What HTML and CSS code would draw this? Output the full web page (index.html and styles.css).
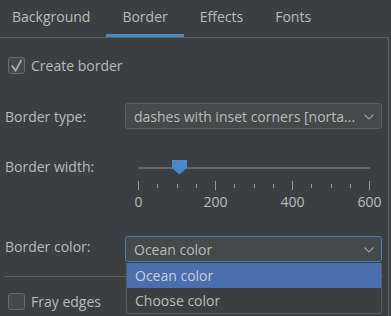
FILE: index.html
```html
<!DOCTYPE html>
<html>
<head>
<meta name="viewport" content="width=device-width, initial-scale=1">
<title>Border settings</title>
<link rel="stylesheet" href="styles.css">
</head>
<body>

<div class="tabs">
  <div class="tab first">Background</div>
  <div class="tab active">Border</div>
  <div class="tab">Effects</div>
  <div class="tab">Fonts</div>
</div>

<div class="panel">

  <label class="check-row first-check">
    <span class="checkbox checked">
      <svg width="17" height="17" viewBox="0 0 17 17"><path d="M3.8 8.6 L7.6 13.6 L13.4 2.8" fill="none" stroke="#aeaeae" stroke-width="1.7"/></svg>
    </span>
    Create border
  </label>

  <div class="row type-row">
    <div class="label">Border type:</div>
    <div class="combo">
      <span class="combo-text">dashes with inset corners [norta...</span>
      <svg class="chevron" width="10" height="6" viewBox="0 0 10 6"><path d="M0.5 0.5 L5 5 L9.5 0.5" fill="none" stroke="#9a9a9a" stroke-width="1.2"/></svg>
    </div>
  </div>

  <div class="row width-row">
    <div class="label">Border width:</div>
    <div class="slider">
      <div class="track">
        <div class="thumb" style="left: 34px;">
          <svg width="15" height="15" viewBox="0 0 15 15"><path d="M0 0 H15 V8 L7.5 14.5 L0 8 Z" fill="#4a88c7"/></svg>
        </div>
      </div>
      <div class="ticks">
        <span class="tick major"></span><span class="tick"></span><span class="tick"></span><span class="tick"></span>
        <span class="tick major"></span><span class="tick"></span><span class="tick"></span><span class="tick"></span>
        <span class="tick major"></span><span class="tick"></span><span class="tick"></span><span class="tick"></span>
        <span class="tick major"></span>
      </div>
      <div class="tick-labels">
        <span>0</span><span>200</span><span>400</span><span>600</span>
      </div>
    </div>
  </div>

  <div class="row color-row">
    <div class="label">Border color:</div>
    <div class="combo focused">
      <span class="combo-text">Ocean color</span>
      <svg class="chevron" width="10" height="6" viewBox="0 0 10 6"><path d="M0.5 0.5 L5 5 L9.5 0.5" fill="none" stroke="#9a9a9a" stroke-width="1.2"/></svg>
      <div class="popup">
        <div class="item selected">Ocean color</div>
        <div class="item">Choose color</div>
      </div>
    </div>
  </div>

  <div class="separator"></div>

  <label class="check-row">
    <span class="checkbox"></span>
    Fray edges
  </label>

</div>

</body>
</html>
```

FILE: styles.css
```css
* {
  box-sizing: border-box;
}

body {
  margin: 0;
  width: 391px;
  height: 316px;
  overflow: hidden;
  background-color: #3c3f41;
  color: #bbbbbb;
  font-family: "Open Sans", "Noto Sans", sans-serif;
  font-size: 14px;
}

.tabs {
  display: flex;
  height: 37px;
}

.tab {
  padding: 0 16px;
  line-height: 34px;
  border-bottom: 3px solid transparent;
}

.tab.first {
  margin-left: -4px;
}

.tab.active {
  border-bottom-color: #4a88c7;
}

.panel {
  position: relative;
  height: 279px;
  margin-right: 2px;
  border-top: 1px solid #5e6162;
  border-right: 1px solid #5e6162;
}

.check-row {
  display: flex;
  align-items: center;
  gap: 6px;
  margin-left: 8px;
  height: 17px;
}

.first-check {
  margin-top: 19px;
}

.checkbox {
  width: 17px;
  height: 17px;
  border: 1px solid #6b6b6b;
  border-radius: 3px;
  background-color: #43494a;
  display: flex;
}

.checkbox.checked svg {
  margin: -1px;
}

.row {
  display: flex;
  margin-left: 5px;
}

.label {
  width: 120px;
  align-self: center;
}

.type-row {
  margin-top: 29px;
}

.combo {
  position: relative;
  width: 257px;
  height: 26px;
  border: 1px solid #5e6162;
  border-radius: 3px;
  background-color: #45494a;
  display: flex;
  align-items: center;
  padding: 0 7px 0 8px;
}

.combo.focused {
  border-color: #4a7fb8;
}

.combo-text {
  flex: 1;
  white-space: nowrap;
  overflow: hidden;
}

.chevron {
  margin-top: 1px;
}

.width-row {
  margin-top: 29px;
}

.width-row .label {
  align-self: flex-start;
  line-height: 17px;
}

.slider {
  width: 257px;
  padding-left: 13px;
}

.track {
  position: relative;
  width: 232px;
  height: 2px;
  margin-top: 9px;
  background-color: #646667;
}

.thumb {
  position: absolute;
  top: -7px;
  width: 15px;
  height: 15px;
  display: flex;
}

.ticks {
  display: flex;
  justify-content: space-between;
  align-items: center;
  width: 232px;
  height: 9px;
  margin-top: 12px;
}

.tick {
  width: 1px;
  height: 4px;
  background-color: #999999;
}

.tick.major {
  height: 9px;
}

.tick-labels {
  display: flex;
  justify-content: space-between;
  width: 232px;
  margin-top: 3px;
  line-height: 17px;
}

.tick-labels span {
  width: 1px;
  display: flex;
  justify-content: center;
}

.color-row {
  margin-top: 26px;
}

.color-row .label {
  margin-top: -5px;
}

.popup {
  position: absolute;
  top: 26px;
  left: 0;
  width: 256px;
  background-color: #3c3f41;
  border: 1px solid #5b5e60;
  border-top: none;
  border-radius: 0 0 4px 4px;
  z-index: 2;
}

.item {
  height: 25px;
  line-height: 25px;
  padding-left: 8px;
}

.item.selected {
  background-color: #4b6eaf;
  color: #c9cfd8;
}

.separator {
  height: 1px;
  margin: 14px 5px 0 4px;
  background-color: #5e6162;
}

.separator + .check-row {
  margin-top: 16px;
}
```
